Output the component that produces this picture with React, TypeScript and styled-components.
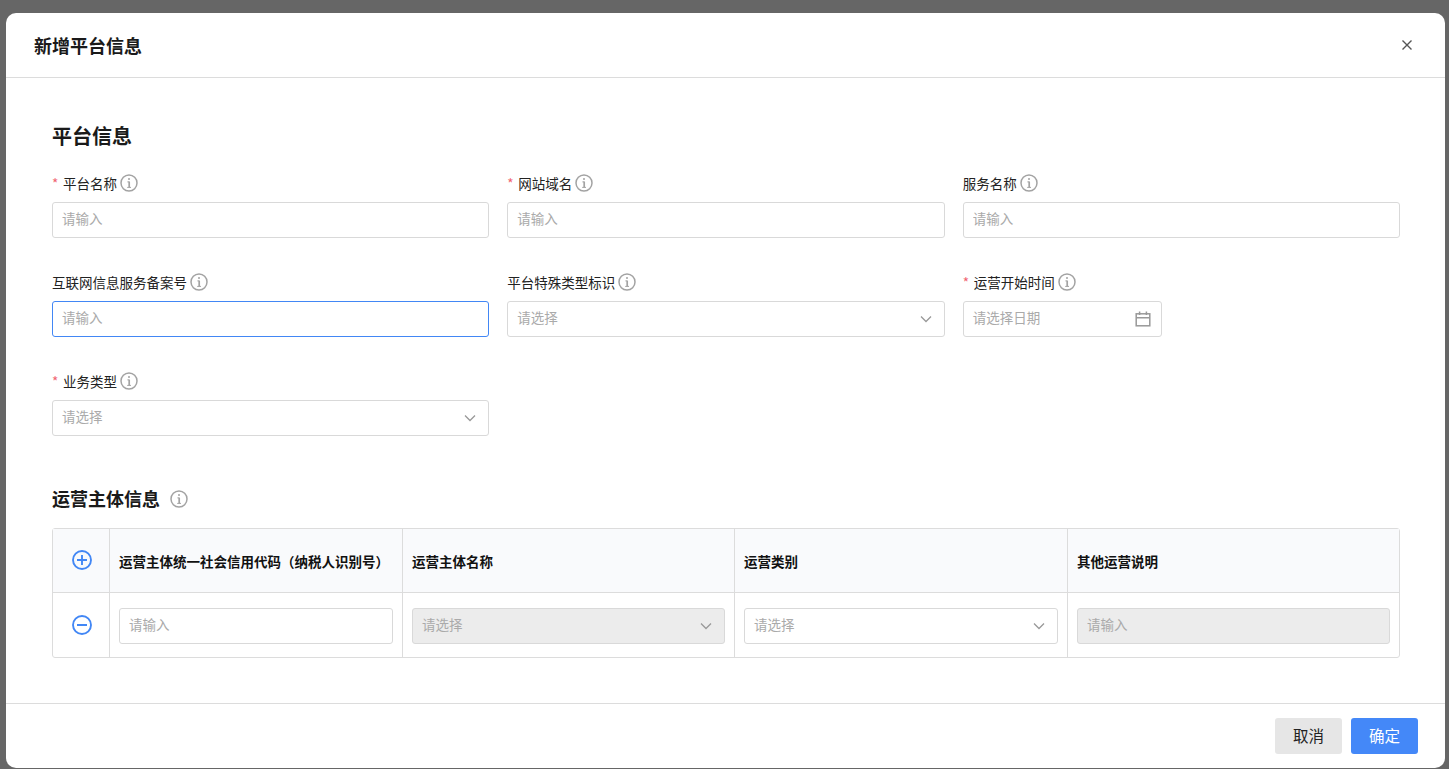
import styled, { createGlobalStyle } from "styled-components";

const GlobalStyle = createGlobalStyle`
  * { box-sizing: border-box; }
  html, body { margin: 0; height: 100%; overflow: hidden; background: #666; }
  body { font-family: "Microsoft YaHei", "Noto Sans CJK SC", "Liberation Sans", sans-serif; color: #1a1a1a; }
`;

const InfoIcon = () => (
  <InfoSvg viewBox="0 0 18 18" fill="none" stroke="#a3a3a3" strokeWidth="1.5">
    <circle cx="9" cy="9" r="8" />
    <path d="M9.2 7.6v5.6" strokeWidth="1.7" />
    <path d="M7.4 7.9h1.8M7.2 13.4h3.8" strokeWidth="1" />
    <circle cx="9" cy="4.9" r="1" fill="#a3a3a3" stroke="none" />
  </InfoSvg>
);

const Chevron = () => (
  <SuffixSvg viewBox="0 0 16 16" fill="none" stroke="#999" strokeWidth="1.3">
    <path d="M3 5.5l5 5 5-5" />
  </SuffixSvg>
);

const CalendarIcon = () => (
  <SuffixSvg viewBox="0 0 16 16" fill="none" stroke="#999" strokeWidth="1.5">
    <rect x="1.2" y="2.8" width="13.6" height="12" />
    <path d="M1 6.8h14M4.6 0.6v3.4M11.4 0.6v3.4" />
  </SuffixSvg>
);

const CircleButton = ({ minus }: { minus?: boolean }) => (
  <CircleSvg viewBox="0 0 20 20" fill="none" stroke="#4287f5" strokeWidth="1.9">
    <circle cx="10" cy="10" r="9" />
    <path d="M5 10h10" />
    {!minus && <path d="M10 5v10" />}
  </CircleSvg>
);

const Label = ({ text, required }: { text: string; required?: boolean }) => (
  <LabelRow>
    {required && <Star>*</Star>}
    <span>{text}</span>
    <InfoIcon />
  </LabelRow>
);

const Select = ({ disabled }: { disabled?: boolean }) => (
  <SelectBox $disabled={disabled}>
    <span>请选择</span>
    <Chevron />
  </SelectBox>
);

export default function App() {
  return (
    <>
      <GlobalStyle />
      <Overlay>
        <Modal>
          <ModalHeader>
            <ModalTitle>新增平台信息</ModalTitle>
            <CloseSvg viewBox="0 0 12 12" fill="none" stroke="#555" strokeWidth="1.4">
              <path d="M1.5 1.5l9 9M10.5 1.5l-9 9" />
            </CloseSvg>
          </ModalHeader>
          <ModalBody>
            <SectionTitle>平台信息</SectionTitle>
            <FormGrid>
              <Field>
                <Label text="平台名称" required />
                <TextInput placeholder="请输入" />
              </Field>
              <Field>
                <Label text="网站域名" required />
                <TextInput placeholder="请输入" />
              </Field>
              <Field>
                <Label text="服务名称" />
                <TextInput placeholder="请输入" />
              </Field>
              <Field>
                <Label text="互联网信息服务备案号" />
                <TextInput placeholder="请输入" $focused />
              </Field>
              <Field>
                <Label text="平台特殊类型标识" />
                <Select />
              </Field>
              <Field>
                <Label text="运营开始时间" required />
                <DateBox>
                  <span>请选择日期</span>
                  <CalendarIcon />
                </DateBox>
              </Field>
              <Field>
                <Label text="业务类型" required />
                <Select />
              </Field>
            </FormGrid>
            <SubTitle>
              运营主体信息
              <InfoIcon />
            </SubTitle>
            <Table>
              <HeadCell $center>
                <CircleButton />
              </HeadCell>
              <HeadCell>运营主体统一社会信用代码（纳税人识别号）</HeadCell>
              <HeadCell>运营主体名称</HeadCell>
              <HeadCell>运营类别</HeadCell>
              <HeadCell $last>其他运营说明</HeadCell>
              <BodyCell $center>
                <CircleButton minus />
              </BodyCell>
              <BodyCell>
                <TextInput placeholder="请输入" />
              </BodyCell>
              <BodyCell>
                <Select disabled />
              </BodyCell>
              <BodyCell>
                <Select />
              </BodyCell>
              <BodyCell $last>
                <TextInput placeholder="请输入" disabled />
              </BodyCell>
            </Table>
          </ModalBody>
          <ModalFooter>
            <CancelButton>取消</CancelButton>
            <ConfirmButton>确定</ConfirmButton>
          </ModalFooter>
        </Modal>
      </Overlay>
    </>
  );
}

const Overlay = styled.div`
  height: 769px;
  padding: 13px 4px 1px 6px;
`;

const Modal = styled.div`
  height: 755px;
  background: #fff;
  border-radius: 10px;
  display: flex;
  flex-direction: column;
  overflow: hidden;
`;

const ModalHeader = styled.div`
  height: 65px;
  flex: none;
  padding: 0 32px 0 28px;
  border-bottom: 1px solid #dcdcdc;
  display: flex;
  align-items: center;
  justify-content: space-between;
`;

const ModalTitle = styled.div`
  font-size: 18px;
  font-weight: 700;
  line-height: 26px;
`;

const CloseSvg = styled.svg`
  width: 12px;
  height: 12px;
`;

const ModalBody = styled.div`
  flex: 1;
  padding: 44px 45px 0 46px;
`;

const SectionTitle = styled.div`
  font-size: 20px;
  font-weight: 700;
  line-height: 28px;
  margin-bottom: 22px;
`;

const FormGrid = styled.div`
  display: grid;
  grid-template-columns: repeat(3, 1fr);
  column-gap: 18px;
  row-gap: 33px;
`;

const Field = styled.div`
  display: flex;
  flex-direction: column;
  align-items: stretch;
  gap: 8px;
`;

const LabelRow = styled.div`
  display: flex;
  align-items: center;
  height: 22px;
  font-size: 13.5px;
  color: #222;
`;

const Star = styled.span`
  color: #f0616d;
  width: 11px;
`;

const InfoSvg = styled.svg`
  width: 18px;
  height: 18px;
  margin-left: 3px;
  flex: none;
`;

const SuffixSvg = styled.svg`
  width: 16px;
  height: 16px;
  flex: none;
`;

const CircleSvg = styled.svg`
  width: 20px;
  height: 20px;
`;

const TextInput = styled.input<{ $focused?: boolean }>`
  width: 100%;
  height: 36px;
  padding: 0 9px 4px;
  border: 1px solid ${(p) => (p.$focused ? "#4287f5" : "#d9d9d9")};
  border-radius: 3px;
  background: #fff;
  font: 13.5px "Microsoft YaHei", "Noto Sans CJK SC", "Liberation Sans", sans-serif;
  outline: none;
  &::placeholder { color: #aaa; opacity: 1; }
  &:disabled { background: #ececec; }
`;

const SelectBox = styled.div<{ $disabled?: boolean }>`
  height: 36px;
  padding: 0 10px 0 9px;
  border: 1px solid #d9d9d9;
  border-radius: 3px;
  background: ${(p) => (p.$disabled ? "#ececec" : "#fff")};
  color: #aaa;
  font-size: 13.5px;
  display: flex;
  align-items: center;
  justify-content: space-between;
  & > span { margin-top: -4px; }
`;

const DateBox = styled(SelectBox)`
  width: 199px;
`;

const SubTitle = styled.div`
  margin-top: 49px;
  margin-bottom: 17px;
  font-size: 18px;
  font-weight: 700;
  line-height: 26px;
  display: flex;
  align-items: center;
  gap: 7px;
  & > svg { margin-top: 2px; }
`;

const Table = styled.div`
  display: grid;
  grid-template-columns: 57px 293px 332px 333px 1fr;
  border: 1px solid #dcdcdc;
  border-radius: 3px;
`;

const HeadCell = styled.div<{ $center?: boolean; $last?: boolean }>`
  height: 64px;
  padding: 0 9px;
  background: #f9fafc;
  border-right: ${(p) => (p.$last ? "none" : "1px solid #dcdcdc")};
  border-bottom: 1px solid #dcdcdc;
  font-size: 13.5px;
  font-weight: 700;
  color: #111;
  white-space: nowrap;
  display: flex;
  align-items: center;
  justify-content: ${(p) => (p.$center ? "center" : "flex-start")};
  ${(p) => p.$center && "padding: 0 0 2px 2px;"}
`;

const BodyCell = styled.div<{ $center?: boolean; $last?: boolean }>`
  height: 64px;
  padding: ${(p) => (p.$center ? "0 0 0 2px" : "2px 9px 0")};
  border-right: ${(p) => (p.$last ? "none" : "1px solid #dcdcdc")};
  display: flex;
  align-items: center;
  justify-content: ${(p) => (p.$center ? "center" : "stretch")};
  & > * { flex: ${(p) => (p.$center ? "none" : "1")}; }
`;

const ModalFooter = styled.div`
  height: 65px;
  flex: none;
  padding: 14px 27px 0 0;
  border-top: 1px solid #dcdcdc;
  display: flex;
  justify-content: flex-end;
  gap: 9px;
`;

const CancelButton = styled.button`
  width: 67px;
  height: 36px;
  padding: 0 0 2px;
  border: none;
  border-radius: 3px;
  background: #e6e6e6;
  color: #222;
  font: 15.5px "Microsoft YaHei", "Noto Sans CJK SC", "Liberation Sans", sans-serif;
`;

const ConfirmButton = styled(CancelButton)`
  background: #4488f8;
  color: #fff;
`;
